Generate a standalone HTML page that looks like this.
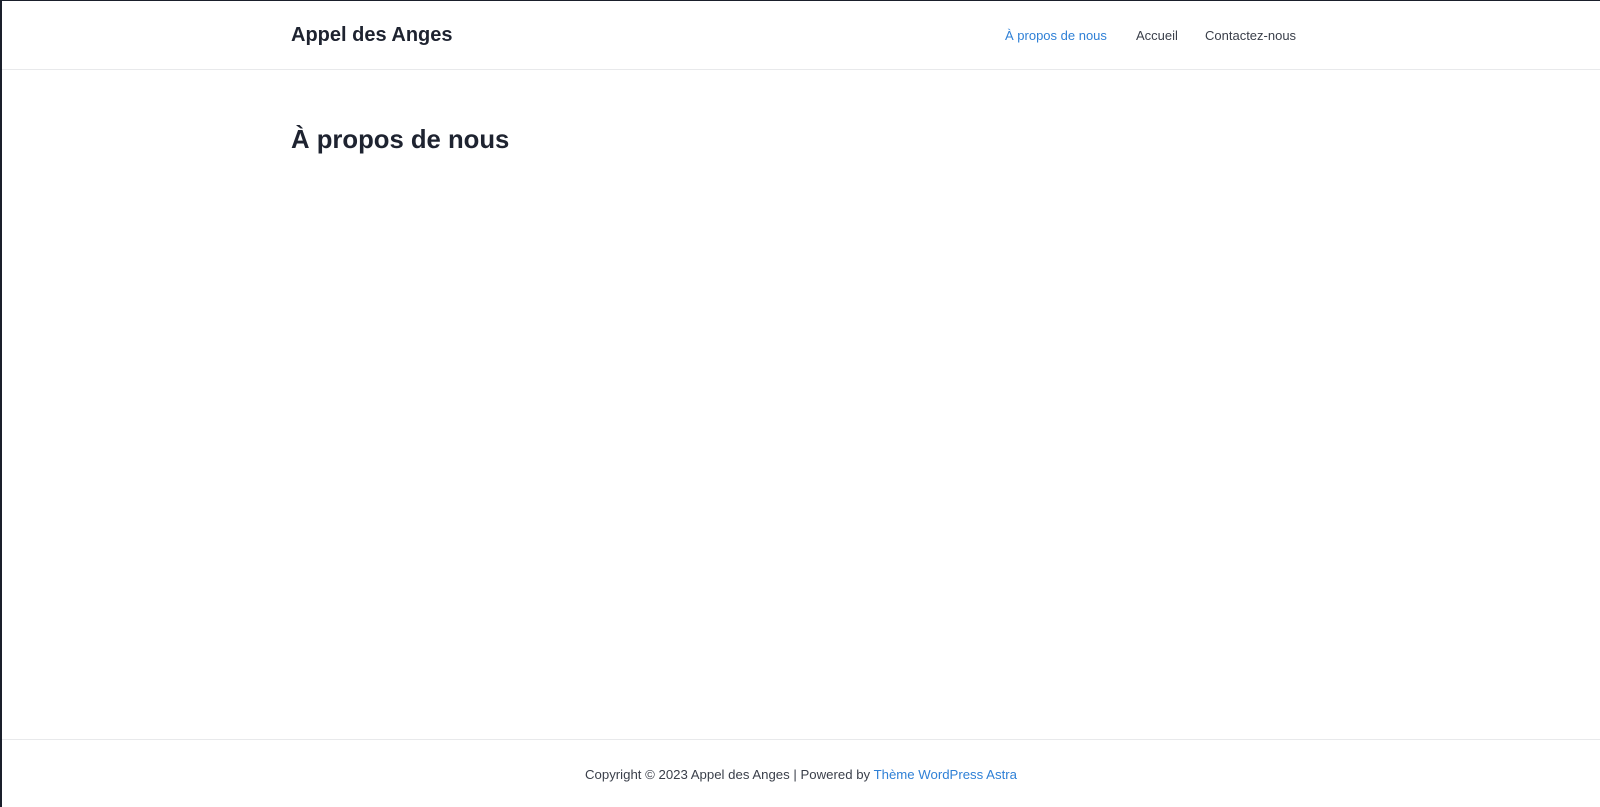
<!DOCTYPE html>
<html><head><meta charset="utf-8"><style>
html,body{margin:0;padding:0;background:#fff;}
body{width:1600px;height:807px;position:relative;overflow:hidden;font-family:"Liberation Sans",sans-serif;color:#1e2330;}
.frame{position:absolute;left:0;top:0;width:1600px;height:807px;box-sizing:border-box;border-top:1px solid #1a1f2b;border-left:2px solid #1a1f2b;}
.hline{position:absolute;left:2px;right:0;height:1px;background:#e8e9eb;}
.t{position:absolute;white-space:nowrap;}
</style></head><body>
<div class="frame"></div>
<div class="t" style="left:291px;top:24px;font-size:20px;font-weight:bold;color:#1e2330;">Appel des Anges</div>
<div class="t" style="left:1005px;top:28px;font-size:13px;color:#2f80d6;">À propos de nous</div>
<div class="t" style="left:1136px;top:28px;font-size:13px;color:#3a3f4a;">Accueil</div>
<div class="t" style="left:1205px;top:28px;font-size:13px;color:#3a3f4a;">Contactez-nous</div>
<div class="hline" style="top:69px;"></div>
<div class="t" style="left:291px;top:126px;font-size:25.7px;font-weight:bold;color:#1e2330;">À propos de nous</div>
<div class="hline" style="top:739px;"></div>
<div class="t" style="left:585px;top:767px;font-size:13.2px;color:#3a3f4a;">Copyright © 2023 Appel des Anges | Powered by <span style="color:#2f80d6">Thème WordPress Astra</span></div>
</body></html>
